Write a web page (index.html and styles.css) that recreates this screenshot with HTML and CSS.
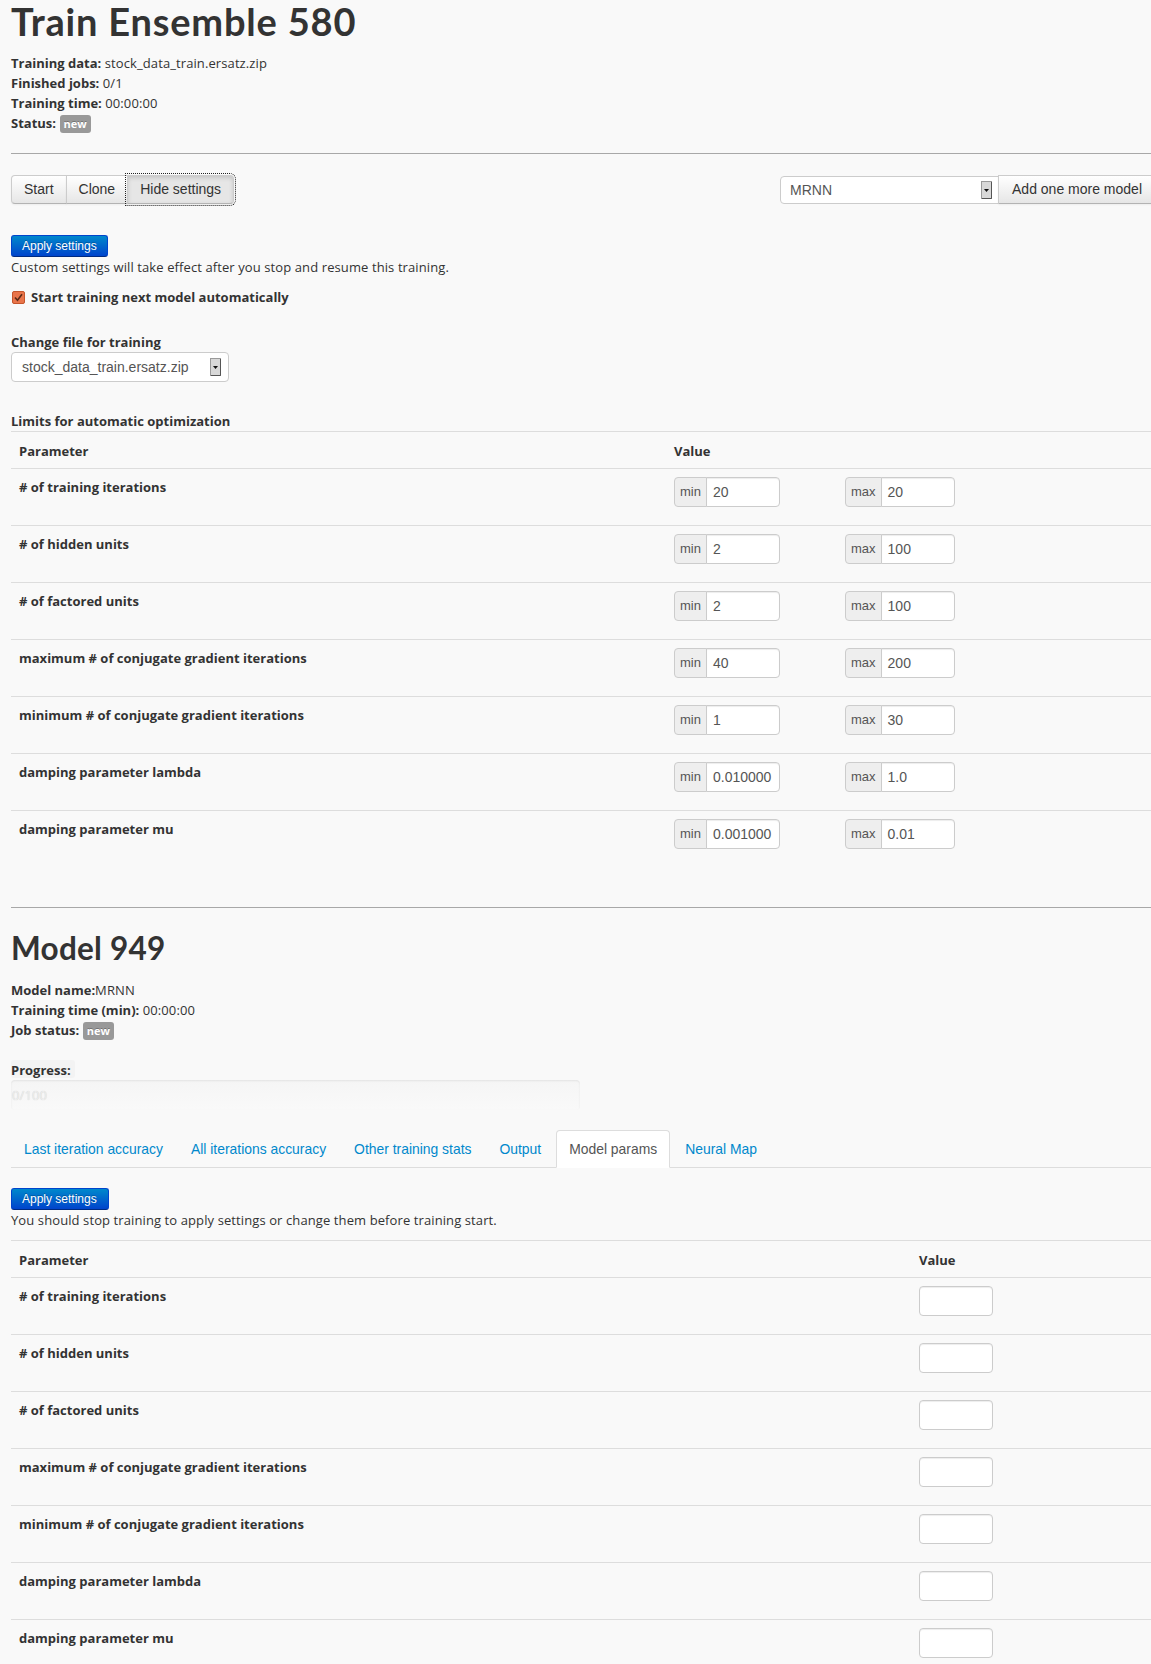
FILE: index.html
```html
<!DOCTYPE html>
<html>
<head>
<meta charset="utf-8">
<title>Train Ensemble 580</title>
<link rel="stylesheet" href="styles.css">
</head>
<body>
<div class="page">
  <h1 class="title">Train Ensemble 580</h1>
  <div class="info">
    <div><b>Training data:</b> stock_data_train.ersatz.zip</div>
    <div><b>Finished jobs:</b> 0/1</div>
    <div><b>Training time:</b> 00:00:00</div>
    <div><b>Status:</b> <span class="badge">new</span></div>
  </div>

  <div class="rule rule-top"></div>

  <div class="toolbar">
    <div class="btn-group">
      <span class="btn">Start</span><span class="btn">Clone</span><span class="btn btn-active">Hide settings</span>
    </div>
    <div class="add-model">
      <div class="select select-model"><span class="select-text">MRNN</span><svg class="arrow" width="11" height="18" viewBox="0 0 11 18"><rect x="0.5" y="0.5" width="10" height="17" fill="#d8d8d8" stroke="#9a9a9a"/><path d="M1 17.5H10.5V1" fill="none" stroke="#555"/><path d="M3 8h5l-2.5 3z" fill="#111"/></svg></div>
      <span class="btn btn-add">Add one more model</span>
    </div>
  </div>

  <span class="btn-primary btn-apply">Apply settings</span>
  <div class="note">Custom settings will take effect after you stop and resume this training.</div>
  <div class="check-line">
    <svg class="checkbox" width="13" height="13" viewBox="0 0 13 13"><rect x="0.5" y="0.5" width="12" height="12" rx="1.5" fill="#e9744a" stroke="#c4552c"/><path d="M3 6.5l2.5 2.8L10 3.3" fill="none" stroke="#5a2a18" stroke-width="1.6"/></svg>
    <b>Start training next model automatically</b>
  </div>

  <div class="field-label"><b>Change file for training</b></div>
  <div class="select select-file"><span class="select-text">stock_data_train.ersatz.zip</span><svg class="arrow" width="11" height="18" viewBox="0 0 11 18"><rect x="0.5" y="0.5" width="10" height="17" fill="#d8d8d8" stroke="#9a9a9a"/><path d="M1 17.5H10.5V1" fill="none" stroke="#555"/><path d="M3 8h5l-2.5 3z" fill="#111"/></svg></div>

  <div class="section-label"><b>Limits for automatic optimization</b></div>
  <table class="grid grid-limits">
    <tr><th class="col-param">Parameter</th><th>Value</th></tr>
    <tr><td class="col-param"># of training iterations</td><td><div class="pair"><div class="igroup"><span class="addon">min</span><span class="ival">20</span></div><div class="igroup"><span class="addon">max</span><span class="ival">20</span></div></div></td></tr>
    <tr><td class="col-param"># of hidden units</td><td><div class="pair"><div class="igroup"><span class="addon">min</span><span class="ival">2</span></div><div class="igroup"><span class="addon">max</span><span class="ival">100</span></div></div></td></tr>
    <tr><td class="col-param"># of factored units</td><td><div class="pair"><div class="igroup"><span class="addon">min</span><span class="ival">2</span></div><div class="igroup"><span class="addon">max</span><span class="ival">100</span></div></div></td></tr>
    <tr><td class="col-param">maximum # of conjugate gradient iterations</td><td><div class="pair"><div class="igroup"><span class="addon">min</span><span class="ival">40</span></div><div class="igroup"><span class="addon">max</span><span class="ival">200</span></div></div></td></tr>
    <tr><td class="col-param">minimum # of conjugate gradient iterations</td><td><div class="pair"><div class="igroup"><span class="addon">min</span><span class="ival">1</span></div><div class="igroup"><span class="addon">max</span><span class="ival">30</span></div></div></td></tr>
    <tr><td class="col-param">damping parameter lambda</td><td><div class="pair"><div class="igroup"><span class="addon">min</span><span class="ival">0.010000</span></div><div class="igroup"><span class="addon">max</span><span class="ival">1.0</span></div></div></td></tr>
    <tr><td class="col-param">damping parameter mu</td><td><div class="pair"><div class="igroup"><span class="addon">min</span><span class="ival">0.001000</span></div><div class="igroup"><span class="addon">max</span><span class="ival">0.01</span></div></div></td></tr>
  </table>

  <div class="rule rule-model"></div>

  <h2 class="subtitle">Model 949</h2>
  <div class="info">
    <div><b>Model name:</b>MRNN</div>
    <div><b>Training time (min):</b> 00:00:00</div>
    <div><b>Job status:</b> <span class="badge">new</span></div>
  </div>

  <div class="progress-label"><b>Progress:</b></div>
  <div class="progress"><span class="progress-text">0/100</span></div>

  <ul class="tabs">
    <li><a class="tab">Last iteration accuracy</a></li>
    <li><a class="tab">All iterations accuracy</a></li>
    <li><a class="tab">Other training stats</a></li>
    <li><a class="tab">Output</a></li>
    <li><a class="tab tab-active">Model params</a></li>
    <li><a class="tab">Neural Map</a></li>
  </ul>

  <span class="btn-primary btn-apply2">Apply settings</span>
  <div class="note">You should stop training to apply settings or change them before training start.</div>

  <table class="grid grid-params">
    <tr><th class="col-param2">Parameter</th><th>Value</th></tr>
    <tr><td class="col-param2"># of training iterations</td><td><span class="ibox"></span></td></tr>
    <tr><td class="col-param2"># of hidden units</td><td><span class="ibox"></span></td></tr>
    <tr><td class="col-param2"># of factored units</td><td><span class="ibox"></span></td></tr>
    <tr><td class="col-param2">maximum # of conjugate gradient iterations</td><td><span class="ibox"></span></td></tr>
    <tr><td class="col-param2">minimum # of conjugate gradient iterations</td><td><span class="ibox"></span></td></tr>
    <tr><td class="col-param2">damping parameter lambda</td><td><span class="ibox"></span></td></tr>
    <tr><td class="col-param2">damping parameter mu</td><td><span class="ibox"></span></td></tr>
  </table>
</div>
</body>
</html>
```

FILE: styles.css
```css
html, body {
  margin: 0;
  padding: 0;
  background: #f9f9f9;
  overflow-x: hidden;
}

body {
  font-family: "Open Sans", Lato, sans-serif;
  font-size: 13px;
  line-height: 20px;
  letter-spacing: 0.1px;
  color: #333;
}

.page {
  width: 1145px;
  padding-left: 11px;
  padding-bottom: 40px;
}

b, th, td.col-param, td.col-param2 {
  font-weight: 700;
  letter-spacing: 0;
}

.title {
  margin: 0 0 11px;
  font-family: Lato, "Open Sans", sans-serif;
  font-size: 38px;
  line-height: 42px;
  font-weight: 700;
  letter-spacing: 0.8px;
  color: #333;
}

.info div {
  height: 20px;
}

.badge {
  display: inline-block;
  padding: 2px 4px;
  font-size: 11px;
  line-height: 14px;
  font-weight: 700;
  letter-spacing: 0;
  color: #fff;
  background: #999;
  border-radius: 3px;
  text-shadow: 0 -1px 0 rgba(0, 0, 0, 0.25);
  vertical-align: baseline;
}

.rule {
  height: 0;
  border-top: 1px solid #a8a8a8;
}

.rule-top {
  margin-top: 20px;
}

.toolbar {
  margin-top: 21px;
  display: flex;
  justify-content: space-between;
  align-items: center;
}

.btn-group {
  display: flex;
}

.btn {
  display: inline-block;
  box-sizing: border-box;
  height: 29px;
  padding: 0 12px;
  font-family: "Liberation Sans", Arial, sans-serif;
  font-size: 14px;
  line-height: 27px;
  letter-spacing: 0;
  color: #333;
  background: linear-gradient(#ffffff, #e6e6e6);
  border: 1px solid #cccccc;
  border-bottom-color: #b3b3b3;
  box-shadow: inset 0 1px 0 rgba(255, 255, 255, 0.2), 0 1px 2px rgba(0, 0, 0, 0.05);
  white-space: nowrap;
}

.btn-group .btn {
  border-radius: 0;
  margin-left: -1px;
}

.btn-group .btn:first-child {
  margin-left: 0;
  border-radius: 4px 0 0 4px;
}

.btn-group .btn:last-child {
  border-radius: 0 4px 4px 0;
}

.btn-active {
  background: #e6e6e6;
  box-shadow: inset 0 2px 4px rgba(0, 0, 0, 0.15), 0 1px 2px rgba(0, 0, 0, 0.05);
  outline: 1px dotted #222;
  outline-offset: 1px;
}

.add-model {
  display: flex;
  align-items: center;
}

.select {
  box-sizing: border-box;
  display: flex;
  align-items: center;
  justify-content: space-between;
  background: #fff;
  border: 1px solid #cccccc;
  font-family: "Liberation Sans", Arial, sans-serif;
  font-size: 14px;
  letter-spacing: 0;
  color: #555;
}

.select-model {
  width: 219px;
  height: 28px;
  padding: 0 6px 0 9px;
  border-radius: 4px 0 0 4px;
}

.btn-add {
  border-radius: 0 4px 4px 0;
  margin-left: -1px;
  padding: 0 13px;
}

.arrow {
  display: block;
  flex: none;
}

.btn-primary {
  display: inline-block;
  box-sizing: border-box;
  height: 22px;
  padding: 0 10px;
  font-family: "Liberation Sans", Arial, sans-serif;
  font-size: 12px;
  line-height: 20px;
  letter-spacing: 0;
  color: #fff;
  background: linear-gradient(#0088cc, #0044cc);
  border: 1px solid #0044cc;
  border-bottom-color: #002a80;
  border-radius: 3px;
  text-shadow: 0 -1px 0 rgba(0, 0, 0, 0.25);
  vertical-align: top;
}

.btn-apply {
  margin-top: 31px;
  width: 97px;
}

.note {
  height: 20px;
}

.check-line {
  margin-top: 10px;
  display: flex;
  align-items: center;
  gap: 6px;
  height: 20px;
}

.checkbox {
  display: block;
  margin-left: 1px;
}

.field-label {
  margin-top: 25px;
}

.select-file {
  width: 218px;
  height: 30px;
  padding: 0 7px 0 10px;
  border-radius: 4px;
}

.section-label {
  margin-top: 29px;
}

.grid {
  width: 100%;
  border-collapse: collapse;
  border-spacing: 0;
}

.grid th,
.grid td {
  padding: 8px;
  text-align: left;
  vertical-align: top;
  border-top: 1px solid #dddddd;
  line-height: 20px;
}

.grid th {
  padding-top: 9px;
  padding-bottom: 7px;
}

.col-param {
  width: 639px;
}

.col-param2 {
  width: 884px;
}

.pair {
  display: grid;
  grid-template-columns: 171px 171px;
  margin-bottom: 10px;
}

.igroup {
  display: flex;
  height: 30px;
}

.addon {
  box-sizing: border-box;
  height: 30px;
  padding: 0 5px;
  font-family: "Liberation Sans", Arial, sans-serif;
  font-size: 13px;
  font-weight: 400;
  line-height: 28px;
  letter-spacing: 0;
  color: #555;
  background: #eeeeee;
  border: 1px solid #cccccc;
  border-radius: 4px 0 0 4px;
}

.ival {
  box-sizing: border-box;
  width: 74px;
  height: 30px;
  margin-left: -1px;
  padding: 0 6px;
  font-family: "Liberation Sans", Arial, sans-serif;
  font-size: 14px;
  font-weight: 400;
  line-height: 28px;
  letter-spacing: 0;
  color: #555;
  background: #fff;
  border: 1px solid #cccccc;
  border-radius: 0 4px 4px 0;
  box-shadow: inset 0 1px 1px rgba(0, 0, 0, 0.075);
}

.ibox {
  display: block;
  box-sizing: border-box;
  width: 74px;
  height: 30px;
  margin-bottom: 10px;
  background: #fff;
  border: 1px solid #cccccc;
  border-radius: 4px;
  box-shadow: inset 0 1px 1px rgba(0, 0, 0, 0.075);
}

.rule-model {
  margin-top: 40px;
}

.subtitle {
  margin: 20px 0 12px;
  font-family: Lato, "Open Sans", sans-serif;
  font-size: 31.5px;
  line-height: 40px;
  font-weight: 700;
  letter-spacing: 0.25px;
  color: #333;
}

.progress-label {
  margin-top: 20px;
  display: inline-block;
  height: 18px;
  line-height: 20px;
  padding-right: 4px;
  background: #f3f3f3;
  border-radius: 3px;
  vertical-align: top;
}

.progress {
  box-sizing: border-box;
  width: 569px;
  height: 30px;
  margin-top: 2px;
  padding-left: 1px;
  background: linear-gradient(#f5f5f5, #f9f9f9);
  border-radius: 4px;
  box-shadow: inset 0 1px 2px rgba(0, 0, 0, 0.08);
  line-height: 30px;
}

.progress-text {
  color: #eeeeee;
  text-shadow: 0 0 1px rgba(0, 0, 0, 0.2);
}

.tabs {
  list-style: none;
  margin: 20px 0 0;
  padding: 0;
  display: flex;
  border-bottom: 1px solid #dddddd;
}

.tabs li {
  margin-bottom: -1px;
  margin-right: 2px;
}

.tab {
  display: block;
  padding: 8px 12px;
  line-height: 20px;
  font-family: "Liberation Sans", Arial, sans-serif;
  font-size: 13.9px;
  letter-spacing: 0;
  color: #0088cc;
  border: 1px solid transparent;
  border-radius: 4px 4px 0 0;
}

.tab-active {
  color: #555;
  background: #fff;
  border-color: #dddddd;
  border-bottom-color: transparent;
}

.btn-apply2 {
  margin-top: 20px;
  width: 98px;
}

.grid-params {
  margin-top: 10px;
}
```
